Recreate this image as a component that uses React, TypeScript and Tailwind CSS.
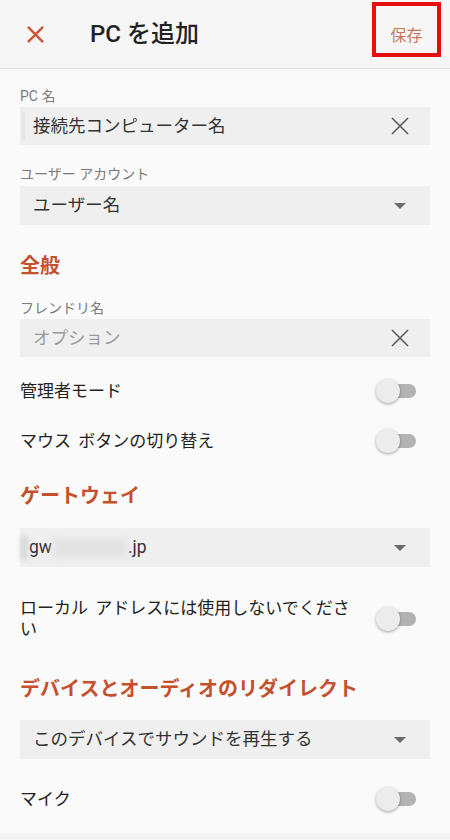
import React from 'react'

const FONT = 'font-["Roboto","Noto_Sans_CJK_JP",sans-serif]'

function CloseIcon({ className = '' }: { className?: string }) {
  return (
    <svg viewBox="0 0 18 18" className={className} fill="none" stroke="currentColor">
      <path d="M1 1L17 17M17 1L1 17" />
    </svg>
  )
}

function Caret() {
  return (
    <svg viewBox="0 0 12 6" className="w-[12px] h-[6px] text-[#6b6b6b]" fill="currentColor">
      <path d="M0 0H12L6 6Z" />
    </svg>
  )
}

function Toggle() {
  return (
    <div className="relative w-[40px] h-[26px] flex items-center shrink-0">
      <div className="ml-[4px] w-[36px] h-[14px] rounded-full bg-[#b2b2b2]" />
      <div className="absolute left-0 top-[1px] w-[24px] h-[24px] rounded-full bg-[#ececec] shadow-[0_1px_3px_rgba(0,0,0,0.35)]" />
    </div>
  )
}

function Label({ children }: { children: React.ReactNode }) {
  return <div className="text-[14px] leading-[16px] text-[#7a7a7a]">{children}</div>
}

function SectionTitle({ children, className = '' }: { children: React.ReactNode; className?: string }) {
  return (
    <div className={`text-[20px] leading-[28px] font-bold text-[#c4502e] ${className}`}>{children}</div>
  )
}

function TextField({ value, placeholder, cursor }: { value?: string; placeholder?: string; cursor?: boolean }) {
  return (
    <div className="h-[38px] bg-[#efefef] flex items-center pl-[13px] pr-[21px] mt-[3px] relative">
      {cursor && <div className="absolute left-[2px] top-[5px] w-[3px] h-[28px] bg-[#e6e6e6]" />}
      <span className={`flex-1 text-[17.5px] ${value ? 'text-[#333]' : 'text-[#9a9a9a]'}`}>
        {value ?? placeholder}
      </span>
      <CloseIcon className="w-[18px] h-[18px] text-[#555] stroke-[1.5]" />
    </div>
  )
}

function Select({ children, className = '' }: { children: React.ReactNode; className?: string }) {
  return (
    <div className={`h-[39px] bg-[#efefef] flex items-center pl-[13px] pr-[24px] ${className}`}>
      <div className="flex-1 text-[17.5px] text-[#333] flex items-center">{children}</div>
      <Caret />
    </div>
  )
}

function SwitchRow({ label, className = '' }: { label: React.ReactNode; className?: string }) {
  return (
    <div className={`flex items-center justify-between min-h-[50px] pr-[14px] ${className}`}>
      <div className="text-[17px] leading-[21px] text-[#222] pr-[16px] [word-spacing:3px]">{label}</div>
      <Toggle />
    </div>
  )
}

export default function App() {
  return (
    <div className={`${FONT} w-[450px] h-[840px] bg-[#fafafa] overflow-hidden flex flex-col`}>
      {/* header */}
      <div className="h-[69px] bg-[#f6f6f6] border-b border-[#e2e2e2] flex items-center shrink-0">
        <CloseIcon className="ml-[27px] w-[17px] h-[17px] text-[#cf5637] stroke-[2.6]" />
        <div className="ml-[46px] text-[24px] font-medium text-[#222] flex-1">PC を追加</div>
        <div className="mr-[9px] mb-[9px] w-[69px] h-[55px] border-[4px] border-[#e60f0f] flex items-center justify-center pt-[12px]">
          <span className="text-[16px] text-[#c7785b]">保存</span>
        </div>
      </div>

      <div className="px-[20px] flex-1 flex flex-col">
        <div className="mt-[19px]">
          <Label>PC 名</Label>
        </div>
        <TextField value="接続先コンピューター名" cursor />

        <div className="mt-[21px]">
          <Label>ユーザー アカウント</Label>
        </div>
        <Select className="mt-[4px]">ユーザー名</Select>

        <SectionTitle className="mt-[27px]">全般</SectionTitle>

        <div className="mt-[20px]">
          <Label>フレンドリ名</Label>
        </div>
        <TextField placeholder="オプション" />

        <SwitchRow label="管理者モード" className="mt-[9px]" />
        <SwitchRow label="マウス ボタンの切り替え" />

        <SectionTitle className="mt-[16px]">ゲートウェイ</SectionTitle>

        <Select className="mt-[18px] !pl-0">
          <span className="w-[8px] h-[24px] bg-[#dadada] blur-[2px] mr-[1px]" />
          <span>gw</span>
          <span className="w-[74px] h-[20px] bg-[#e3e3e3] blur-[3px] mx-[1px]" />
          <span>.jp</span>
        </Select>

        <SwitchRow label="ローカル アドレスには使用しないでください" className="mt-[21px] !min-h-[62px]" />

        <SectionTitle className="mt-[25px]">デバイスとオーディオのリダイレクト</SectionTitle>

        <Select className="mt-[17px]">このデバイスでサウンドを再生する</Select>

        <SwitchRow label="マイク" className="mt-[15px]" />
      </div>
      <div className="h-[7px] bg-[#f3f3f3] shrink-0" />
    </div>
  )
}
